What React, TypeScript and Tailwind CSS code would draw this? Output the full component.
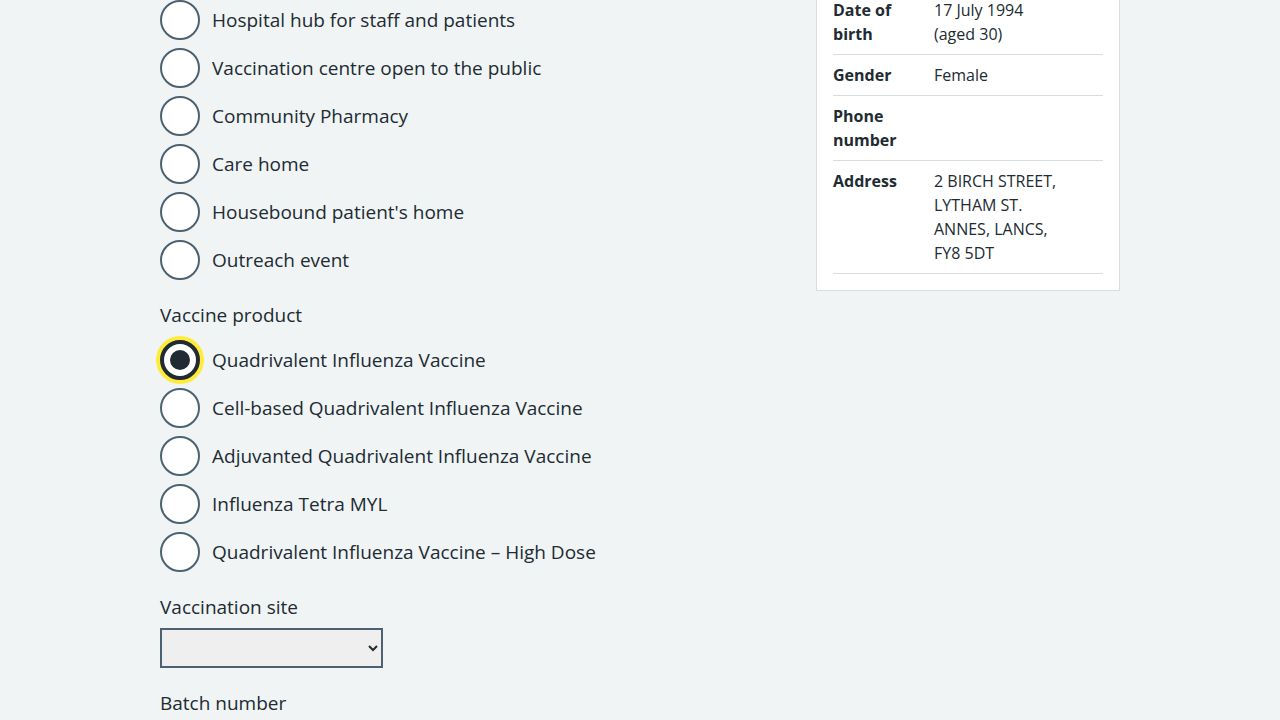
const font = { fontFamily: '"Open Sans", "Noto Sans", Arial, sans-serif' };

const locations = [
  'Hospital hub for staff and patients',
  'Vaccination centre open to the public',
  'Community Pharmacy',
  'Care home',
  "Housebound patient's home",
  'Outreach event',
];

const products = [
  'Quadrivalent Influenza Vaccine',
  'Cell-based Quadrivalent Influenza Vaccine',
  'Adjuvanted Quadrivalent Influenza Vaccine',
  'Influenza Tetra MYL',
  'Quadrivalent Influenza Vaccine – High Dose',
];

function Radio({ label, checked = false }: { label: string; checked?: boolean }) {
  return (
    <div className="flex items-center h-10">
      {checked ? (
        <div className="w-10 h-10 shrink-0 rounded-full border-4 border-[#212b32] bg-white ring-4 ring-[#ffeb3b] flex items-center justify-center">
          <div className="w-5 h-5 rounded-full bg-[#212b32]" />
        </div>
      ) : (
        <div className="w-10 h-10 shrink-0 rounded-full border-2 border-[#4c6272] bg-white" />
      )}
      <span className="pl-3 text-[19px] leading-7 text-[#212b32]">{label}</span>
    </div>
  );
}

function SummaryRow({ k, v }: { k: string; v: React.ReactNode }) {
  return (
    <div className="flex border-b border-[#d8dde0] py-2 text-[16px] leading-6">
      <div className="w-[81px] mr-5 font-bold">{k}</div>
      <div className="w-[125px]">{v}</div>
    </div>
  );
}

export default function App() {
  return (
    <div className="min-h-screen bg-[#f0f4f5] text-[#212b32] overflow-hidden" style={font}>
      <div className="w-[960px] mx-auto flex gap-4 items-start">
        {/* Form */}
        <div className="w-[640px]">
          <div className="flex flex-col gap-2">
            {locations.map((l) => (
              <Radio key={l} label={l} />
            ))}
          </div>

          <div className="mt-[21px]">
            <div className="text-[19px] leading-7 mb-[11px]">Vaccine product</div>
            <div className="flex flex-col gap-2">
              {products.map((p, i) => (
                <Radio key={p} label={p} checked={i === 0} />
              ))}
            </div>
          </div>

          <div className="mt-[21px]">
            <label className="block text-[19px] leading-7 mb-[7px]">Vaccination site</label>
            <select className="w-[223px] h-10 border-2 border-[#4c6272] bg-[#efefef] text-[16px]">
              <option></option>
            </select>
          </div>

          <div className="mt-[21px]">
            <label className="block text-[19px] leading-7 mb-1">Batch number</label>
            <input className="w-[223px] h-10 border-2 border-[#4c6272] bg-white" />
          </div>
        </div>

        {/* Patient details */}
        <div className="w-[304px] -mt-[109px]">
          <div className="bg-white border border-[#d8dde0] p-4">
            <SummaryRow k="Name" v="JANE SMITH" />
            <SummaryRow k="NHS" v="9000000000" />
            <SummaryRow k="Date of birth" v={<>17 July 1994 (aged 30)</>} />
            <SummaryRow k="Gender" v="Female" />
            <SummaryRow k="Phone number" v="" />
            <SummaryRow k="Address" v="2 BIRCH STREET, LYTHAM ST. ANNES, LANCS, FY8 5DT" />
          </div>
        </div>
      </div>
    </div>
  );
}
